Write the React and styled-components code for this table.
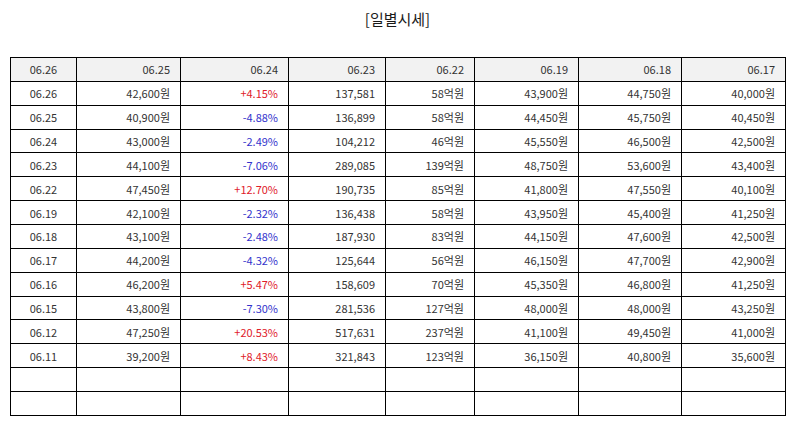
import React from "react";
import styled, { createGlobalStyle } from "styled-components";

const GlobalStyle = createGlobalStyle`
  body {
    margin: 0;
    background: #ffffff;
    font-family: "Noto Sans CJK KR", "Noto Sans", sans-serif;
  }
`;

const Root = styled.div`
  width: 794px;
  padding: 6px 0 0 10px;
  box-sizing: border-box;
`;

const Title = styled.h2`
  margin: 0 0 26px;
  width: 775px;
  text-align: center;
  font-size: 15px;
  font-weight: 400;
  line-height: 25px;
  color: #1a1a1a;
`;

const Table = styled.table`
  width: 776px;
  border-collapse: collapse;
  table-layout: fixed;
  font-size: 11px;
  color: #333;
`;

const Cell = styled.td`
  height: 22.87px;
  padding: 0 10px;
  border: 1px solid #000;
  font-weight: 400;
  text-align: ${(props) => (props.center ? "center" : "right")};
  color: ${(props) =>
    props.tone === "up" ? "#e0202a" : props.tone === "down" ? "#3333cc" : "#333"};
  background: ${(props) => (props.head ? "#f2f2f2" : "#fff")};
  white-space: nowrap;
`;

const widths = [66, 104, 108, 97, 89, 104, 103, 104];
const headers = ["06.26", "06.25", "06.24", "06.23", "06.22", "06.19", "06.18", "06.17"];

const rows = [
  ["06.26", "42,600원", "+4.15%", "137,581", "58억원", "43,900원", "44,750원", "40,000원"],
  ["06.25", "40,900원", "-4.88%", "136,899", "58억원", "44,450원", "45,750원", "40,450원"],
  ["06.24", "43,000원", "-2.49%", "104,212", "46억원", "45,550원", "46,500원", "42,500원"],
  ["06.23", "44,100원", "-7.06%", "289,085", "139억원", "48,750원", "53,600원", "43,400원"],
  ["06.22", "47,450원", "+12.70%", "190,735", "85억원", "41,800원", "47,550원", "40,100원"],
  ["06.19", "42,100원", "-2.32%", "136,438", "58억원", "43,950원", "45,400원", "41,250원"],
  ["06.18", "43,100원", "-2.48%", "187,930", "83억원", "44,150원", "47,600원", "42,500원"],
  ["06.17", "44,200원", "-4.32%", "125,644", "56억원", "46,150원", "47,700원", "42,900원"],
  ["06.16", "46,200원", "+5.47%", "158,609", "70억원", "45,350원", "46,800원", "41,250원"],
  ["06.15", "43,800원", "-7.30%", "281,536", "127억원", "48,000원", "48,000원", "43,250원"],
  ["06.12", "47,250원", "+20.53%", "517,631", "237억원", "41,100원", "49,450원", "41,000원"],
  ["06.11", "39,200원", "+8.43%", "321,843", "123억원", "36,150원", "40,800원", "35,600원"],
  ["", "", "", "", "", "", "", ""],
  ["", "", "", "", "", "", "", ""],
];

const toneOf = (value) => {
  if (value.startsWith("+")) return "up";
  if (value.startsWith("-")) return "down";
  return null;
};

const App = () => (
  <Root>
    <GlobalStyle />
    <Title>[일별시세]</Title>
    <Table>
      <colgroup>
        {widths.map((w, index) => (
          <col key={index} style={{ width: w }} />
        ))}
      </colgroup>
      <thead>
        <tr>
          {headers.map((header, index) => (
            <Cell as="th" key={index} head center={index === 0}>
              {header}
            </Cell>
          ))}
        </tr>
      </thead>
      <tbody>
        {rows.map((row, rowIndex) => (
          <tr key={rowIndex}>
            {row.map((value, colIndex) => (
              <Cell
                key={colIndex}
                center={colIndex === 0}
                tone={colIndex === 2 ? toneOf(value) : null}
              >
                {value}
              </Cell>
            ))}
          </tr>
        ))}
      </tbody>
    </Table>
  </Root>
);

export default App;
